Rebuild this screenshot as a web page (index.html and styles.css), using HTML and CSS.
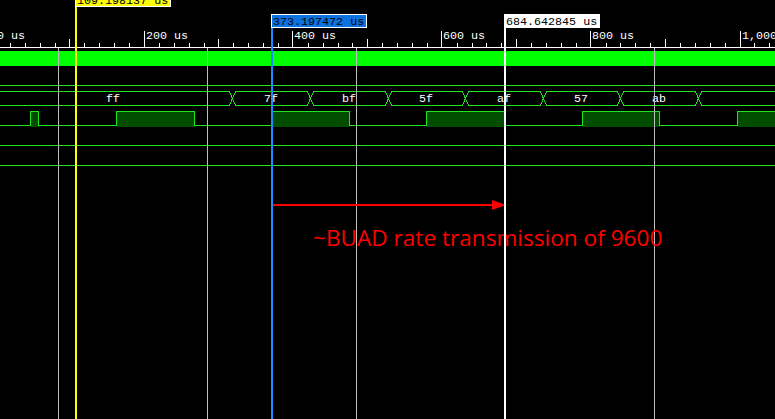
FILE: index.html
```html
<!DOCTYPE html>
<html lang="en">
<head>
<meta charset="utf-8">
<title>Waveform</title>
<link rel="stylesheet" href="styles.css">
</head>
<body>
<div class="viewer">
<svg class="wave" width="775" height="419" viewBox="0 0 775 419" xmlns="http://www.w3.org/2000/svg">
  <!-- ruler -->
  <g class="ruler">
    <path class="tick" d="M10.5 43V47M25.5 43V47M40.5 43V47M55.5 43V47M84.5 43V47M99.5 43V47M114.5 43V47M129.5 43V47M159.5 43V47M174.5 43V47M189.5 43V47M204.5 43V47M233.5 43V47M248.5 43V47M263.5 43V47M278.5 43V47M308.5 43V47M323.5 43V47M338.5 43V47M352.5 43V47M382.5 43V47M397.5 43V47M412.5 43V47M427.5 43V47M457.5 43V47M472.5 43V47M486.5 43V47M501.5 43V47M531.5 43V47M546.5 43V47M561.5 43V47M576.5 43V47M606.5 43V47M620.5 43V47M635.5 43V47M650.5 43V47M680.5 43V47M695.5 43V47M710.5 43V47M725.5 43V47M754.5 43V47M769.5 43V47"/>
    <path class="tick" d="M69.5 39V47M218.5 39V47M367.5 39V47M516.5 39V47M665.5 39V47"/>
    <path class="tick" d="M144.5 31V47M292.5 31V47M441.5 31V47M590.5 31V47M740.5 31V47"/>
    <path class="tick" d="M0 47.5H775"/>
    <text class="rtext" x="-3" y="39">0 us</text>
    <text class="rtext" x="146" y="39">200 us</text>
    <text class="rtext" x="294" y="39">400 us</text>
    <text class="rtext" x="443" y="39">600 us</text>
    <text class="rtext" x="592" y="39">800 us</text>
    <text class="rtext" x="742" y="39">1,000 us</text>
  </g>

  <!-- top bar -->
  <rect class="bar" x="0" y="51" width="775" height="15"/>

  <!-- row lines -->
  <path class="sig" d="M0 85.5H775M0 145.5H775M0 165.5H775"/>

  <!-- bus -->
  <path class="sig" d="M0 91.5H229M236 91.5H307M314 91.5H385M392 91.5H462M469 91.5H540M547 91.5H617M624 91.5H695M702 91.5H775
                       M0 105.5H229M236 105.5H307M314 105.5H385M392 105.5H462M469 105.5H540M547 105.5H617M624 105.5H695M702 105.5H775
                       M229 91L236 106M229 106L236 91
                       M307 91L314 106M307 106L314 91
                       M385 91L392 106M385 106L392 91
                       M462 91L469 106M462 106L469 91
                       M540 91L547 106M540 106L547 91
                       M617 91L624 106M617 106L624 91
                       M695 91L702 106M695 106L702 91"/>
  <g class="btext">
    <text x="113" y="102">ff</text>
    <text x="271" y="102">7f</text>
    <text x="349" y="102">bf</text>
    <text x="426" y="102">5f</text>
    <text x="504" y="102">af</text>
    <text x="581" y="102">57</text>
    <text x="659" y="102">ab</text>
  </g>

  <!-- digital signal -->
  <g>
    <rect class="hi" x="31" y="112" width="8" height="15"/>
    <rect class="hi" x="117" y="112" width="78" height="15"/>
    <rect class="hi" x="272" y="112" width="78" height="15"/>
    <rect class="hi" x="427" y="112" width="77" height="15"/>
    <rect class="hi" x="583" y="112" width="77" height="15"/>
    <rect class="hi" x="738" y="112" width="37" height="15"/>
    <path class="sig" d="M0 125.5H30.5V111.5H38.5V125.5H116.5V111.5H194.5V125.5H271.5V111.5H349.5V125.5H426.5V111.5H504.5V125.5H582.5V111.5H659.5V125.5H737.5V111.5H775"/>
  </g>

  <!-- grid -->
  <path class="grid" d="M58.5 48V419M207.5 48V419M356.5 48V419M505.5 48V419M654.5 48V419"/>

  <!-- annotation -->
  <path class="arrow-line" d="M273 205H494"/>
  <polygon class="arrow-head" points="492,200 506,205 492,210"/>
  <text class="note" x="313" y="246">~BUAD rate transmission of 9600</text>

  <!-- cursors -->
  <rect class="cur-y" x="75" y="0" width="2" height="419"/>
  <rect class="cur-b" x="271" y="20" width="2" height="399"/>
  <rect class="cur-w" x="504" y="20" width="2" height="399"/>

  <rect class="lab-y" x="75.5" y="-6.5" width="95" height="13"/>
  <text class="ltext" x="77" y="4">109.198137 us</text>
  <rect class="lab-b" x="271.5" y="14.5" width="95" height="13"/>
  <text class="ltext" x="273" y="25">373.197472 us</text>
  <rect class="lab-w" x="504.5" y="14.5" width="95" height="13"/>
  <text class="ltext" x="506" y="25">684.642845 us</text>
</svg>
</div>
</body>
</html>
```

FILE: styles.css
```css
html, body {
  margin: 0;
  padding: 0;
  background: #000;
  overflow: hidden;
}
.viewer {
  width: 775px;
  height: 419px;
  background: #000;
}
.wave {
  display: block;
  shape-rendering: crispEdges;
}
.tick {
  stroke: #ffffff;
  stroke-width: 1;
  fill: none;
}
.rtext {
  fill: #ffffff;
  font-family: "Liberation Mono", "DejaVu Sans Mono", monospace;
  font-size: 11.7px;
}
.bar {
  fill: #00ff00;
}
.sig {
  stroke: #1ee61e;
  stroke-width: 1;
  fill: none;
}
.hi {
  fill: #004d00;
}
.btext text {
  fill: #ffffff;
  font-family: "Liberation Mono", "DejaVu Sans Mono", monospace;
  font-size: 11.7px;
  text-anchor: middle;
}
.grid {
  stroke: #bdbdbd;
  stroke-width: 1;
  fill: none;
}
.arrow-line {
  stroke: #ff0000;
  stroke-width: 2;
  fill: none;
}
.arrow-head {
  fill: #ff0000;
  shape-rendering: geometricPrecision;
}
.note {
  fill: #ff0000;
  font-family: "Open Sans", "Noto Sans", sans-serif;
  font-size: 22.6px;
  shape-rendering: geometricPrecision;
}
.cur-y { fill: #ffff00; }
.cur-b { fill: #1a8aff; }
.cur-w { fill: #ffffff; }
.lab-y {
  fill: #ffff00;
  stroke: #ffffff;
  stroke-width: 1;
}
.lab-b {
  fill: #0b72e0;
  stroke: #ffffff;
  stroke-width: 1;
}
.lab-w {
  fill: #ffffff;
  stroke: #ffffff;
  stroke-width: 1;
}
.ltext {
  fill: #000000;
  font-family: "Liberation Mono", "DejaVu Sans Mono", monospace;
  font-size: 11.7px;
}
```
